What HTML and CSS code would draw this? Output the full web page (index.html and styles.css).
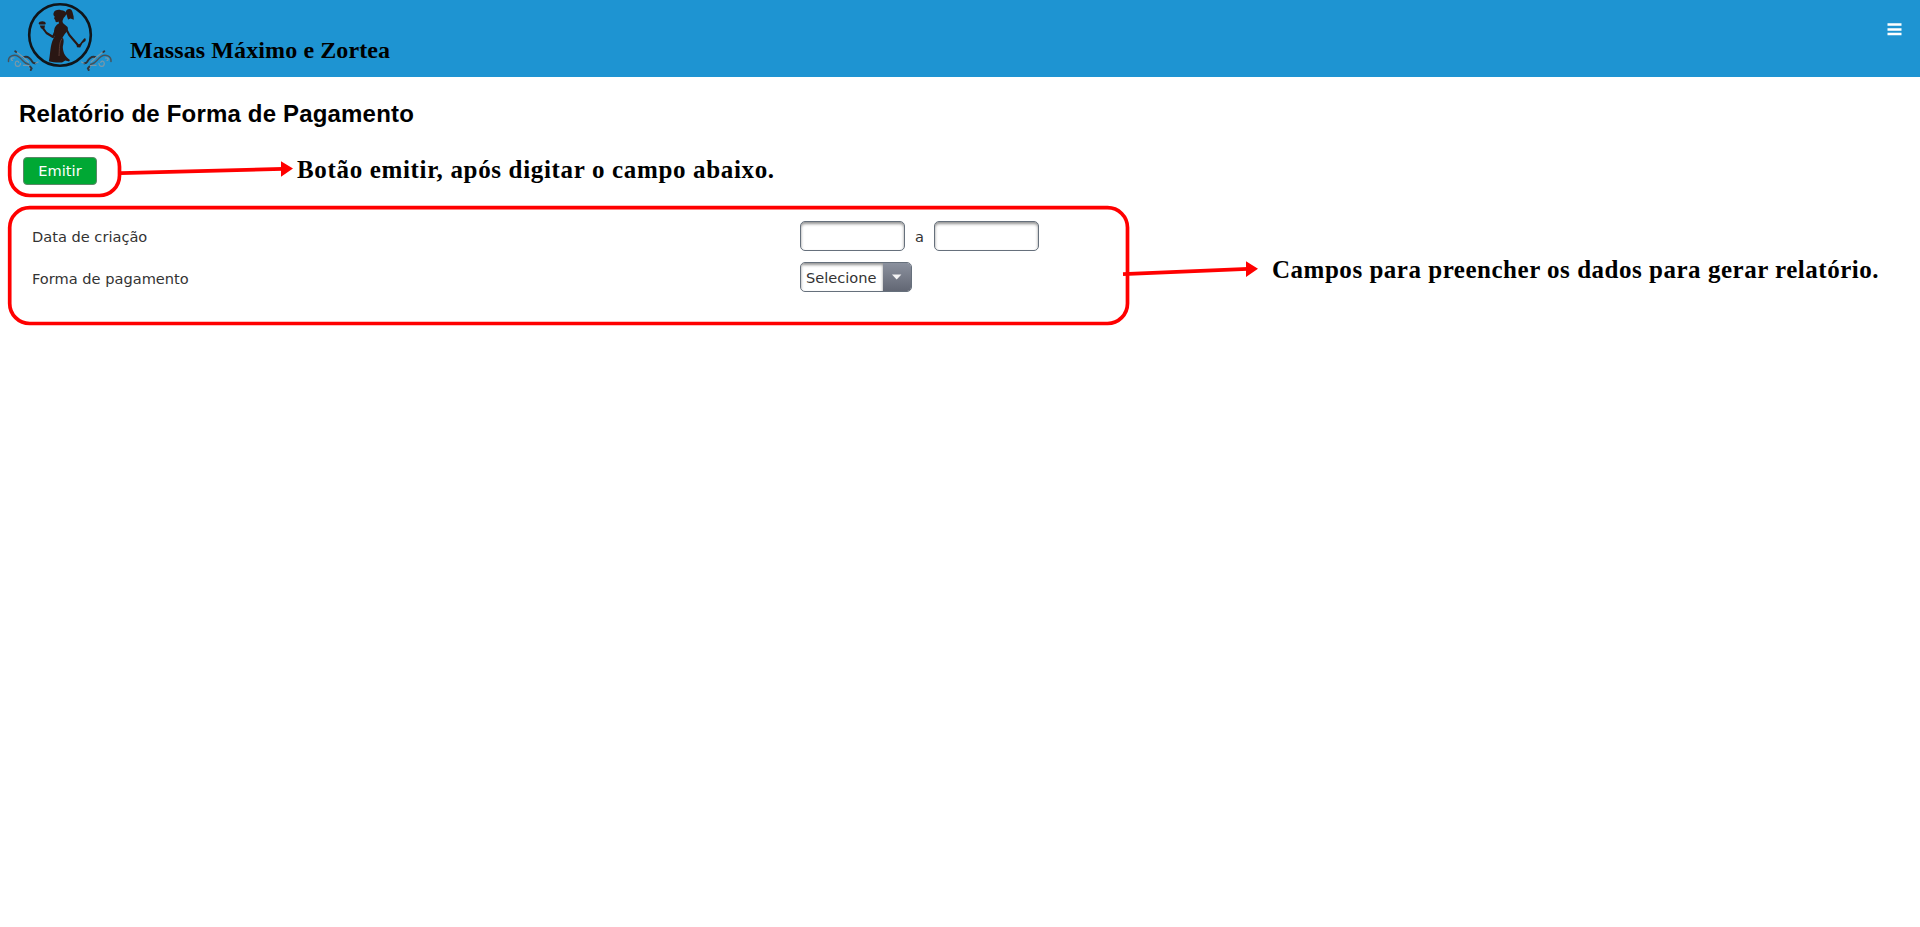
FILE: index.html
```
<!DOCTYPE html>
<html lang="pt-BR">
<head>
<meta charset="utf-8">
<title>Relatório de Forma de Pagamento</title>
<link rel="stylesheet" href="styles.css">
</head>
<body>
<header class="topbar">
  <svg class="logo" width="120" height="77" viewBox="0 0 120 77">
    <circle cx="60" cy="35" r="30.8" fill="none" stroke="#10151a" stroke-width="2.6"/>
    <g fill="#2a1714">
      <path d="M53.5 13.2C54.5 10.2 58 9.3 61 10.2C63.5 10 65 11 65.6 12.4C66 10 67.5 8.8 69.5 9C72.5 9.4 72.6 13 73.6 16.2L73.8 19.8L70.6 18.6L68.2 19.6C67 17.5 67.2 15.5 66.3 14.3C65.5 15.4 65 17 63.6 18L62.6 20.5C62.4 22.3 62.8 23 64 24L67.6 27C68.6 29 67 32 64.8 34L62.5 37.4C64.6 39.5 63.3 44 62.8 47C63 52 64.5 56 70 60L69 61.5L65.3 60.4L62 62.4C57 62.6 52 62.3 48.8 61.2C50.5 53.5 50 45 53.5 38.4L54.5 36.6C53.4 34.5 54 31 54.6 28C55.6 25.5 57.5 24 59 23.4L58.6 21.6C56.6 22.6 55.2 22.3 55.3 20.2L54 18.2L54.8 16.7C53.7 15.7 53.2 14.6 53.5 13.2Z"/>
      <path d="M38.6 23.6C39 20.6 45.5 20.4 45.8 23.6L45.2 24.6H39.4ZM39.8 25.5H45L44.4 28.6H41Z"/>
      <path d="M84.4 38.2L85.8 38.8L85.5 41L82.4 43.3L80.2 47.4L77 47.2L76.6 45.3L80 43.8L82.3 40.8Z"/>
    </g>
    <path d="M42.5 27.6L46.5 33L53 37L56 30M65.5 27.8L69.3 35L78.5 45.8" fill="none" stroke="#2a1714" stroke-width="2.1" stroke-linejoin="round"/>
    <path d="M62.2 38.5C58.8 42 59.6 50 59 56" fill="none" stroke="#6d4a44" stroke-width=".7"/>
    <g id="flourish" fill="none" stroke-linecap="round">
      <path d="M8.5 61.5C8 56 14 53.8 18.5 56.6C23.5 60 23 63.5 29 64.4" stroke="#46525b" stroke-width="1.5"/>
      <path d="M23.5 57.2C28 55.4 30.5 58.5 32.3 61.8C33 63 34 63.4 35.5 63.2" stroke="#2c3138" stroke-width="2"/>
      <path d="M12.5 60.5C10 59.5 11.5 57.4 14 58M20.6 63.3C20.2 67.5 15.3 67.4 15.2 63.5C15.3 60.4 18.4 60.5 18.7 62.5M16 51.5L23 57L28.5 62M23.4 65.3L28.8 65.5L30 68M35.5 63.2L38 62" stroke="#7b98a8" stroke-width="1.2"/>
      <path d="M15.2 51.3L16.2 52M30.2 66.6L31.6 68.4L30.8 70" stroke="#303840" stroke-width="2"/>
    </g>
    <use href="#flourish" transform="matrix(-1 0 0 1 119.5 0)"/>
  </svg>
  <span class="brand">Massas Máximo e Zortea</span>
  <svg class="burger" width="16" height="14" viewBox="0 0 16 14"><path d="M.5 1.6h14M.5 6.4h14M.5 11h14" stroke="#fff" stroke-width="2.5"/></svg>
</header>

<main class="page">
  <h1 class="title">Relatório de Forma de Pagamento</h1>
  <div class="actions">
    <button class="emit" type="button">Emitir</button>
    <strong class="note">Botão emitir, após digitar o campo abaixo.</strong>
  </div>
  <div class="report">
    <form class="fields">
      <div class="row">
        <label class="label">Data de criação</label>
        <input class="date" type="text"><span class="until">a</span><input class="date" type="text">
      </div>
      <div class="row">
        <label class="label label-payment">Forma de pagamento</label>
        <div class="select">
          <span class="value">Selecione</span>
          <span class="trigger"><svg width="10" height="6" viewBox="0 0 10 6"><path d="M0 .4H9.4L4.7 5.6Z" fill="#f4f4f5"/></svg></span>
        </div>
      </div>
    </form>
    <strong class="note note-fields">Campos para preencher os dados para gerar relatório.</strong>
  </div>
</main>

<svg class="markup" width="1300" height="340" viewBox="0 0 1300 340" fill="none" stroke="#f00" stroke-width="3.7">
  <rect x="9.7" y="146.7" width="109.8" height="48.8" rx="20"/>
  <rect x="9.7" y="207.6" width="1117.8" height="115.9" rx="20"/>
  <path d="M121 173.2L283 168.8M1123 274.2L1248 268.8"/>
  <path d="M281 161.2V176.8L293 168.6ZM1246 261.2V277L1258 268.8Z" fill="#f00" stroke="none"/>
</svg>
</body>
</html>
```
FILE: styles.css
```
* { box-sizing: border-box; }
body {
  margin: 0;
  background: #fff;
  color: #333;
  font: 14.6px/21px "DejaVu Sans", sans-serif;
}
.topbar {
  display: flex;
  align-items: flex-start;
  height: 77px;
  padding-right: 17px;
  background: #1e94d2;
}
.logo { display: block; }
.brand {
  margin: 36px 0 0 10px;
  color: #000;
  font: bold 24px/28px "Liberation Serif", serif;
  letter-spacing: .1px;
}
.burger { margin: 23px 0 0 auto; }
.page { padding-top: 23px; }
.title {
  margin: 0 0 0 19px;
  color: #000;
  font: bold 24px/28px "Liberation Sans", sans-serif;
  letter-spacing: .18px;
}
.actions {
  display: flex;
  align-items: flex-start;
  margin-top: 26px;
  height: 46px;
  padding-left: 23px;
}
.emit {
  width: 74px;
  height: 28px;
  margin-top: 3px;
  padding: 0;
  border: 1px solid #5c8767;
  border-radius: 4px;
  background: #00a834;
  color: #fff;
  font: 14.6px/22px "DejaVu Sans", sans-serif;
}
.note {
  margin: 1px 0 0 200px;
  color: #000;
  font: bold 25px/30px "Liberation Serif", serif;
  letter-spacing: .66px;
  white-space: nowrap;
}
.report {
  display: flex;
  align-items: flex-start;
  padding: 21px 0 0 32px;
}
.fields {
  display: grid;
  gap: 11px;
  width: 1240px;
}
.row {
  display: flex;
  align-items: center;
  height: 30px;
}
.label { width: 768px; }
.label-payment { padding-top: 3px; }
.date {
  width: 105px;
  height: 30px;
  border: 1px solid #66707c;
  border-radius: 5px;
  background: #fff;
  box-shadow: inset 0 2px 3px #929292;
}
.until {
  width: 29px;
  text-align: center;
}
.select {
  display: flex;
  width: 112px;
  height: 30px;
  border: 1px solid #66707c;
  border-radius: 5px;
  overflow: hidden;
}
.value {
  width: 82px;
  padding: 4px 0 0 5px;
  box-shadow: inset 0 2px 3px #929292;
}
.trigger {
  display: flex;
  flex: 1;
  justify-content: center;
  padding-top: 11px;
  background: linear-gradient(#8b919e, #626774);
}
.note-fields {
  margin: 34px 0 0;
  letter-spacing: .52px;
}
.markup {
  position: absolute;
  top: 0;
  left: 0;
  pointer-events: none;
}
```
